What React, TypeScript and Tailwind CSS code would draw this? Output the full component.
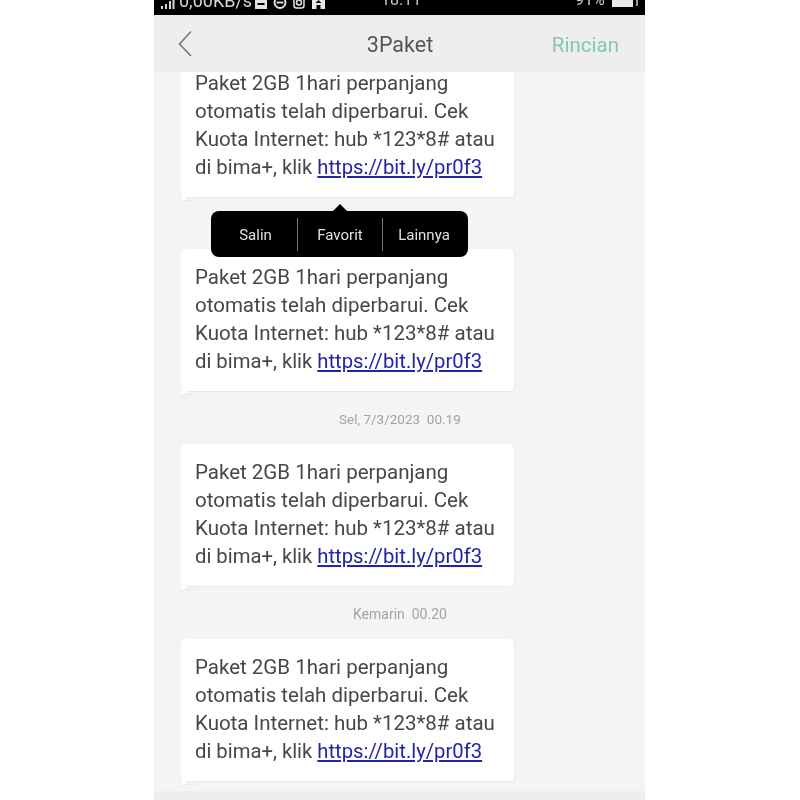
import React from "react";

function Bubble({ clipped = false }: { clipped?: boolean }) {
  return (
    <div className={`relative shrink-0 w-[334px] ml-[27px] bg-white rounded-[5px] border-b border-r border-[#e9e9e9] pl-[14px] text-[20.5px] leading-[28px] text-[#474747] ${clipped ? "rounded-t-none h-[126px]" : "pt-[14px] h-[143px]"}`}>
      <div className={clipped ? "-mt-[3px]" : ""}>
        <div className="whitespace-nowrap">Paket 2GB 1hari perpanjang</div>
        <div className="whitespace-nowrap">otomatis telah diperbarui. Cek</div>
        <div className="whitespace-nowrap">Kuota Internet: hub *123*8# atau</div>
        <div className="whitespace-nowrap text-[20.25px]">
          di bima+, klik <span className="text-[#2323a8] underline underline-offset-[2px]">https://bit.ly/pr0f3</span>
        </div>
      </div>
      <svg className="absolute left-0 bottom-[-6px]" width="12" height="7" viewBox="0 0 12 7">
        <path d="M0 0 L0 6 Q0.5 6.5 2 5.5 Q4 4 6 1 L12 0 Z" fill="#ffffff" />
        <path d="M0 0 L0 6 Q0.5 6.5 2 5.5 Q3.5 4.6 5.5 4.4 L12 4.4" fill="none" stroke="#e4e4e4" strokeWidth="0.8" />
      </svg>
    </div>
  );
}

function Stamp({ children, pl, size }: { children: React.ReactNode; pl: string; size: string }) {
  return (
    <div className={`h-[52px] shrink-0 flex items-center pt-[2px] ${pl} ${size} text-[#a3a3a3] whitespace-pre`}>{children}</div>
  );
}

export default function App() {
  return (
    <div className="w-[800px] h-[800px] bg-white overflow-hidden font-['Roboto',sans-serif] blur-[0.5px]">
      <div className="relative ml-[154px] w-[491px] h-[800px] bg-[#f4f4f4] flex flex-col overflow-hidden">
        <div className="h-[15px] bg-black text-[#d8d8d8] overflow-hidden shrink-0 text-[16px] leading-[18px] relative">
          <div className="flex items-start pl-[7px] -mt-[8px] whitespace-nowrap">
            <svg className="mt-[8px]" width="14" height="9" viewBox="0 0 14 9" fill="#d8d8d8">
              <rect x="0" y="6" width="2" height="3" />
              <rect x="4" y="4" width="2" height="5" />
              <rect x="8" y="1" width="2" height="8" />
              <rect x="11.5" y="0" width="2" height="9" />
            </svg>
            <span className="ml-[4px] text-[18px] leading-[18px]">0,00KB/s</span>
            <svg className="ml-[3px] mt-[8px]" width="12" height="9" viewBox="0 0 12 9" fill="#e2e2e2">
              <path d="M0 0h12v9H0z" />
              <rect x="2.5" y="3" width="7" height="2" fill="#000" />
            </svg>
            <svg className="ml-[6px] mt-[8px]" width="14" height="9" viewBox="0 0 14 9" fill="none" stroke="#e2e2e2" strokeWidth="1.8">
              <circle cx="7" cy="2.5" r="5.5" />
              <path d="M3.5 2.5h7" />
            </svg>
            <svg className="ml-[6px] mt-[8px]" width="12" height="9" viewBox="0 0 12 9" fill="none" stroke="#e2e2e2" strokeWidth="1.5">
              <rect x="1" y="-4" width="10" height="12" rx="2.5" />
              <circle cx="6" cy="2.5" r="2.5" />
            </svg>
            <svg className="ml-[7px] mt-[8px]" width="13" height="9" viewBox="0 0 13 9" fill="#e8e8e8">
              <path d="M0 0h13v9H8.5V5h-4v4H0z" />
              <path d="M6.5 0l3 3h-6z" fill="#000" />
            </svg>
          </div>
          <span className="absolute left-[227px] -top-[9px] text-[#c8c8c8]">18.11</span>
          <span className="absolute left-[421px] -top-[9px] text-[#c8c8c8]">91%</span>
          <div className="absolute left-[458px] top-0 w-[21px] h-[7px] bg-[#e8e8e8]" />
          <div className="absolute left-[482px] top-0 w-[2px] h-[6px] bg-[#999999]" />
        </div>
        <div className="h-[57px] bg-[#eeeeee] relative flex items-center justify-center shrink-0">
          <svg className="absolute left-[24px] top-[15px]" width="15" height="27" viewBox="0 0 15 27" fill="none" stroke="#777777" strokeWidth="1.6">
            <path d="M13 1.5 L1.5 14 L13 26" />
          </svg>
          <span className="text-[21.5px] text-[#555555] mt-[3px] ml-[1px]">3Paket</span>
          <span className="absolute right-[26px] top-[15px] text-[20.5px] text-[#82c8b8]">Rincian</span>
        </div>
        <div className="flex-1 overflow-hidden flex flex-col relative">
          <Bubble clipped />
          <div className="h-[51px] shrink-0" />
          <Bubble />
          <Stamp pl="pl-[185px]" size="text-[13.5px]">Sel, 7/3/2023  00.19</Stamp>
          <Bubble />
          <Stamp pl="pl-[199px]" size="text-[14px]">Kemarin  00.20</Stamp>
          <Bubble />
        </div>
        <div className="absolute left-0 right-0 bottom-0 h-[9px] bg-[#eeeeee]" />
        <div className="absolute left-[57px] top-[211px] w-[257px] h-[46px] bg-black rounded-[8px] flex items-center text-[15px] text-[#e0e0e0]">
          <div className="absolute left-[122px] -top-[7px] w-0 h-0 border-l-[7px] border-r-[7px] border-b-[7px] border-l-transparent border-r-transparent border-b-black" />
          <div className="w-[86px] text-center pl-[3px] pt-[2px]">Salin</div>
          <div className="w-px h-[33px] bg-[#777777]" />
          <div className="w-[84px] text-center pt-[2px]">Favorit</div>
          <div className="w-px h-[33px] bg-[#777777]" />
          <div className="flex-1 text-center pr-[3px] pt-[2px]">Lainnya</div>
        </div>
      </div>
    </div>
  );
}
